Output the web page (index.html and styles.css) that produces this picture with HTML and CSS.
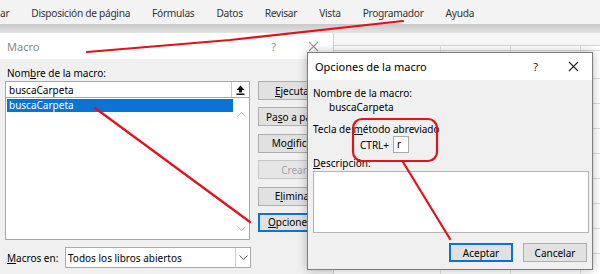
FILE: index.html
```html
<!DOCTYPE html>
<html lang="es">
<head>
    <meta charset="UTF-8">
    <title>Macro - Opciones de la macro</title>
    <link rel="stylesheet" href="styles.css">
</head>
<body>
    <div class="ribbon">
        <span class="tab">ar</span>
        <span class="tab">Disposición de página</span>
        <span class="tab">Fórmulas</span>
        <span class="tab">Datos</span>
        <span class="tab">Revisar</span>
        <span class="tab">Vista</span>
        <span class="tab">Programador</span>
        <span class="tab">Ayuda</span>
    </div>
    <div class="ribbon-edge"></div>

    <div class="workspace">
        <!-- dialogo Macro (inactivo, detras) -->
        <div class="macro">
            <div class="titlebar inactive">
                <span class="title">Macro</span>
                <span class="help">?</span>
                <svg class="close" width="11" height="11" viewBox="0 0 11 11"><path d="M1 1L10 10M10 1L1 10"/></svg>
            </div>
            <div class="macro-body">
                <div class="lbl">Nom<u>b</u>re de la macro:</div>
                <div class="macro-main">
                    <div class="macro-left">
                        <div class="name-field">
                            <span class="name-text">buscaCarpeta</span>
                            <span class="pick-btn">
                                <svg width="9" height="10" viewBox="0 0 9 10"><path d="M4.5 0.5L8.5 5H6V7.5H3V5H0.5Z"/><rect x="0.5" y="8.5" width="8" height="1.5"/></svg>
                            </span>
                        </div>
                        <div class="list">
                            <div class="list-items">
                                <div class="item selected">buscaCarpeta</div>
                            </div>
                            <div class="scroll">
                                <svg width="9" height="5" viewBox="0 0 9 5"><path d="M0.5 4.5L4.5 0.5L8.5 4.5"/></svg>
                                <svg width="9" height="5" viewBox="0 0 9 5"><path d="M0.5 0.5L4.5 4.5L8.5 0.5"/></svg>
                            </div>
                        </div>
                    </div>
                    <div class="macro-btns">
                        <div class="btn"><u>E</u>jecutar</div>
                        <div class="btn">Pa<u>s</u>o a paso</div>
                        <div class="btn">Mo<u>d</u>ificar</div>
                        <div class="btn disabled">Crear</div>
                        <div class="btn">E<u>l</u>iminar</div>
                        <div class="btn focused"><u>O</u>pciones...</div>
                    </div>
                </div>
                <div class="where">
                    <span class="where-lbl"><u>M</u>acros en:</span>
                    <div class="combo">
                        <span class="combo-text">Todos los libros abiertos</span>
                        <span class="combo-arrow">
                            <svg width="9" height="5" viewBox="0 0 9 5"><path d="M0.5 0.5L4.5 4.5L8.5 0.5"/></svg>
                        </span>
                    </div>
                </div>
            </div>
        </div>
        <div class="sheet">
            <div class="sheet-head"></div>
            <div class="sheet-grid"></div>
        </div>
    </div>

    <!-- dialogo Opciones de la macro (activo, encima) -->
    <div class="options">
        <div class="titlebar">
            <span class="title">Opciones de la macro</span>
            <span class="help">?</span>
            <svg class="close" width="11" height="11" viewBox="0 0 11 11"><path d="M1 1L10 10M10 1L1 10"/></svg>
        </div>
        <div class="options-body">
            <div class="lbl first">Nombre de la macro:</div>
            <div class="lbl indent">buscaCarpeta</div>
            <div class="lbl gap">Tecla de <u>m</u>étodo abreviado</div>
            <div class="shortcut">
                <span>CTRL+</span>
                <span class="key">r</span>
            </div>
            <div class="lbl desc"><u>D</u>escripción:</div>
            <div class="textarea"></div>
            <div class="actions">
                <div class="btn wide focused">Aceptar</div>
                <div class="btn wide">Cancelar</div>
            </div>
        </div>
    </div>

    <!-- anotaciones en rojo -->
    <svg class="marks" width="600" height="274" viewBox="0 0 600 274">
        <polyline points="87,52 230,40 403,21"/>
        <line x1="95" y1="108" x2="250" y2="222"/>
        <rect x="353" y="119" width="84" height="42" rx="9"/>
        <line x1="403" y1="162" x2="450" y2="239"/>
    </svg>
</body>
</html>
```

FILE: styles.css
```css
body {
    margin: 0;
    width: 600px;
    height: 274px;
    overflow: hidden;
    position: relative;
    font-family: 'Noto Sans', 'Open Sans', sans-serif;
    font-size: 10px;
    color: #000;
    background: #fff;
}
u {
    text-decoration-thickness: 1px;
    text-underline-offset: 1px;
}

/* cinta de opciones */
.ribbon {
    height: 24px;
    background: #f3f3f3;
    display: flex;
    align-items: center;
    gap: 22px;
    padding-top: 1px;
    box-sizing: border-box;
}
.tab {
    font-size: 10.2px;
    letter-spacing: -0.3px;
    color: #333;
    white-space: nowrap;
}
.ribbon-edge {
    height: 9px;
    background: linear-gradient(#c9c9c9, #e4e4e4);
}

.workspace {
    display: flex;
    height: 241px;
}

/* barras de titulo */
.titlebar {
    display: flex;
    align-items: center;
    background: #fff;
    font-size: 11px;
}
.titlebar .title {
    flex: 1;
}
.titlebar .help {
    color: #222;
}
.titlebar .close {
    fill: none;
    stroke: #222;
    stroke-width: 1.1;
}
.titlebar.inactive .title,
.titlebar.inactive .help {
    color: #8a8a8a;
}
.titlebar.inactive .close {
    stroke: #9a9a9a;
}

/* dialogo Macro */
.macro {
    width: 333px;
    flex: none;
    background: #f0f0f0;
    border-right: 1px solid #d2d2d2;
}
.macro .titlebar {
    height: 26px;
    padding-left: 7px;
}
.macro .help {
    margin-right: 32px;
}
.macro .close {
    margin-right: 14px;
}
.macro-body {
    padding-left: 5px;
}
.lbl {
    line-height: 14px;
    white-space: nowrap;
}
.macro-body > .lbl {
    margin-top: 7px;
    padding-left: 2px;
}
.macro-main {
    display: flex;
    gap: 8px;
    margin-top: 1px;
}
.macro-left {
    width: 245px;
}
.name-field {
    height: 17px;
    box-sizing: border-box;
    border: 1px solid #a9a9a9;
    background: #fff;
    display: flex;
    align-items: center;
}
.name-text {
    flex: 1;
    padding-left: 3px;
}
.pick-btn {
    width: 17px;
    height: 15px;
    border-left: 1px solid #c8c8c8;
    display: flex;
    align-items: center;
    justify-content: center;
    fill: #111;
}
.list {
    height: 143px;
    margin-top: -1px;
    box-sizing: border-box;
    border: 1px solid #a9a9a9;
    background: #fff;
    display: flex;
}
.list-items {
    flex: 1;
    padding: 1px 0 0 1px;
}
.item {
    height: 13px;
    line-height: 13px;
    padding-left: 2px;
}
.item.selected {
    background: #0a74d6;
    color: #fff;
}
.scroll {
    width: 16px;
    display: flex;
    flex-direction: column;
    justify-content: space-between;
    align-items: center;
    padding: 14px 0 8px;
}
.scroll svg,
.combo-arrow svg {
    fill: none;
    stroke: #c2c2c2;
    stroke-width: 1;
}
.macro-btns {
    display: flex;
    flex-direction: column;
    gap: 7.4px;
}
.btn {
    width: 72px;
    height: 19px;
    box-sizing: border-box;
    border: 1px solid #adadad;
    background: #e1e1e1;
    display: flex;
    align-items: center;
    justify-content: center;
    white-space: nowrap;
}
.btn.disabled {
    color: #a3a3a3;
    border-color: #c6c6c6;
    background: #e6e6e6;
}
.btn.focused {
    border-color: #0a74d6;
    box-shadow: inset 0 0 0 1px #0a74d6;
}
.where {
    display: flex;
    align-items: center;
    margin-top: 7px;
}
.where-lbl {
    width: 58px;
    padding-left: 2px;
}
.combo {
    width: 186px;
    height: 21px;
    box-sizing: border-box;
    border: 1px solid #a9a9a9;
    background: #fff;
    display: flex;
    align-items: center;
}
.combo-text {
    flex: 1;
    padding-left: 2px;
}
.combo-arrow {
    width: 14px;
    height: 19px;
    border-left: 1px solid #d0d0d0;
    display: flex;
    align-items: center;
    justify-content: center;
}
.combo-arrow svg {
    stroke: #555;
}

/* hoja de calculo detras */
.sheet {
    flex: 1;
    display: flex;
    flex-direction: column;
}
.sheet-head {
    height: 12px;
    border-bottom: 1px solid #d6d6d6;
    background: #f7f7f7;
}
.sheet-grid {
    flex: 1;
    background-color: #fff;
    background-image:
        repeating-linear-gradient(to bottom, transparent 0 24px, #dcdcdc 24px 25px),
        repeating-linear-gradient(to right, transparent 0 69px, #e2e2e2 69px 70px);
    background-position: 0 8px, 37px 0;
}

/* dialogo Opciones de la macro */
.options {
    position: absolute;
    left: 307px;
    top: 52px;
    width: 286px;
    height: 218px;
    box-sizing: border-box;
    border: 1px solid #7c7c7c;
    background: #f0f0f0;
    box-shadow: 0 0 9px rgba(0, 0, 0, 0.28);
}
.options .titlebar {
    height: 27px;
    padding-left: 7px;
}
.options .help {
    margin-right: 30px;
}
.options .close {
    margin-right: 13px;
}
.options-body {
    padding: 0 3px 0 5px;
}
.options-body .first {
    margin-top: 6px;
}
.options-body .indent {
    padding-left: 16px;
}
.options-body .gap {
    margin-top: 8px;
}
.shortcut {
    display: flex;
    align-items: center;
    gap: 4px;
    padding-left: 47px;
}
.key {
    width: 16px;
    height: 17px;
    box-sizing: border-box;
    border: 1px solid #a9a9a9;
    background: #fff;
    padding-left: 3px;
    line-height: 15px;
}
.options-body .desc {
    margin-top: 3px;
}
.textarea {
    height: 62px;
    margin-top: 1px;
    box-sizing: border-box;
    border: 1px solid #b4b4b4;
    background: #fff;
}
.actions {
    display: flex;
    justify-content: flex-end;
    gap: 10px;
    margin-top: 10px;
    padding-right: 2px;
}
.btn.wide {
    width: 64px;
}

/* anotaciones */
.marks {
    position: absolute;
    left: 0;
    top: 0;
    pointer-events: none;
    fill: none;
    stroke: #e4101a;
    stroke-width: 2.2;
    stroke-linecap: round;
    stroke-linejoin: round;
}
```
